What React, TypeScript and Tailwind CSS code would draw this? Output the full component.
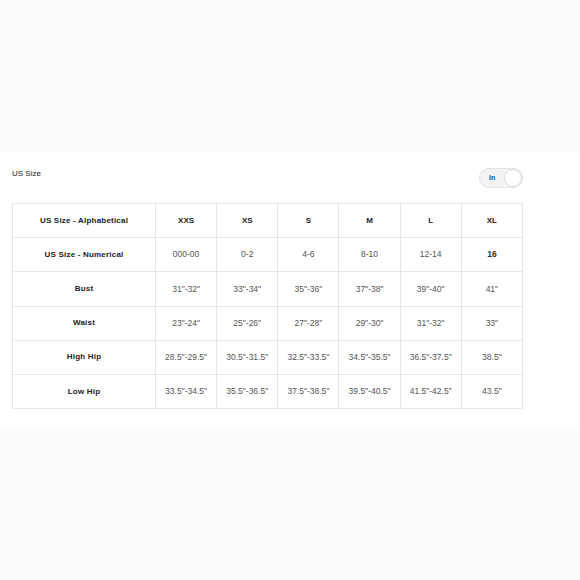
const headers = ["XXS", "XS", "S", "M", "L", "XL"];

const rows: Array<{ label: string; values: string[] }> = [
  { label: "US Size - Numerical", values: ["000-00", "0-2", "4-6", "8-10", "12-14", "16"] },
  { label: "Bust", values: ['31"-32"', '33"-34"', '35"-36"', '37"-38"', '39"-40"', '41"'] },
  { label: "Waist", values: ['23"-24"', '25"-26"', '27"-28"', '29"-30"', '31"-32"', '33"'] },
  {
    label: "High Hip",
    values: ['28.5"-29.5"', '30.5"-31.5"', '32.5"-33.5"', '34.5"-35.5"', '36.5"-37.5"', '38.5"'],
  },
  {
    label: "Low Hip",
    values: ['33.5"-34.5"', '35.5"-36.5"', '37.5"-38.5"', '39.5"-40.5"', '41.5"-42.5"', '43.5"'],
  },
];

export default function App() {
  return (
    <div className="flex h-[580px] w-[580px] flex-col bg-[#fcfcfc] font-['Liberation_Sans',Arial,sans-serif]">
      <div className="h-[152px]" />

      {/* Size chart panel */}
      <div className="flex h-[274px] flex-col bg-white px-3">
        <div className="flex w-[511px] items-start justify-between pt-4">
          <span className="text-[8px] leading-[12px] text-[#222]">US Size</span>
          <button
            type="button"
            className="flex h-5 w-11 items-center justify-between rounded-full border border-[#e2e2e2] bg-[#f3f3f3] pl-[9px]"
          >
            <span className="text-[7px] font-bold text-[#444]">in</span>
            <span className="h-[18px] w-[18px] rounded-full border border-[#dcdcdc] bg-white" />
          </button>
        </div>

        <table className="mt-[15px] w-[511px] table-fixed border-collapse text-center text-[8px]">
          <colgroup>
            <col className="w-[143px]" />
            {headers.map((h) => (
              <col key={h} />
            ))}
          </colgroup>
          <tbody>
            <tr className="h-[34.2px]">
              <td className="border border-[#e6e6e6] font-bold tracking-[0.2px] text-[#222]">
                US Size - Alphabetical
              </td>
              {headers.map((h) => (
                <td key={h} className="border border-[#e6e6e6] font-bold text-[#222]">
                  {h}
                </td>
              ))}
            </tr>
            {rows.map((row) => (
              <tr key={row.label} className="h-[34.2px]">
                <td className="border border-[#e6e6e6] font-bold tracking-[0.2px] text-[#222]">
                  {row.label}
                </td>
                {row.values.map((v, i) => (
                  <td
                    key={i}
                    className={
                      v === "16"
                        ? "border border-[#e6e6e6] text-[8.5px] font-bold text-[#333]"
                        : "border border-[#e6e6e6] text-[8.5px] text-[#555]"
                    }
                  >
                    {v}
                  </td>
                ))}
              </tr>
            ))}
          </tbody>
        </table>
      </div>
    </div>
  );
}
